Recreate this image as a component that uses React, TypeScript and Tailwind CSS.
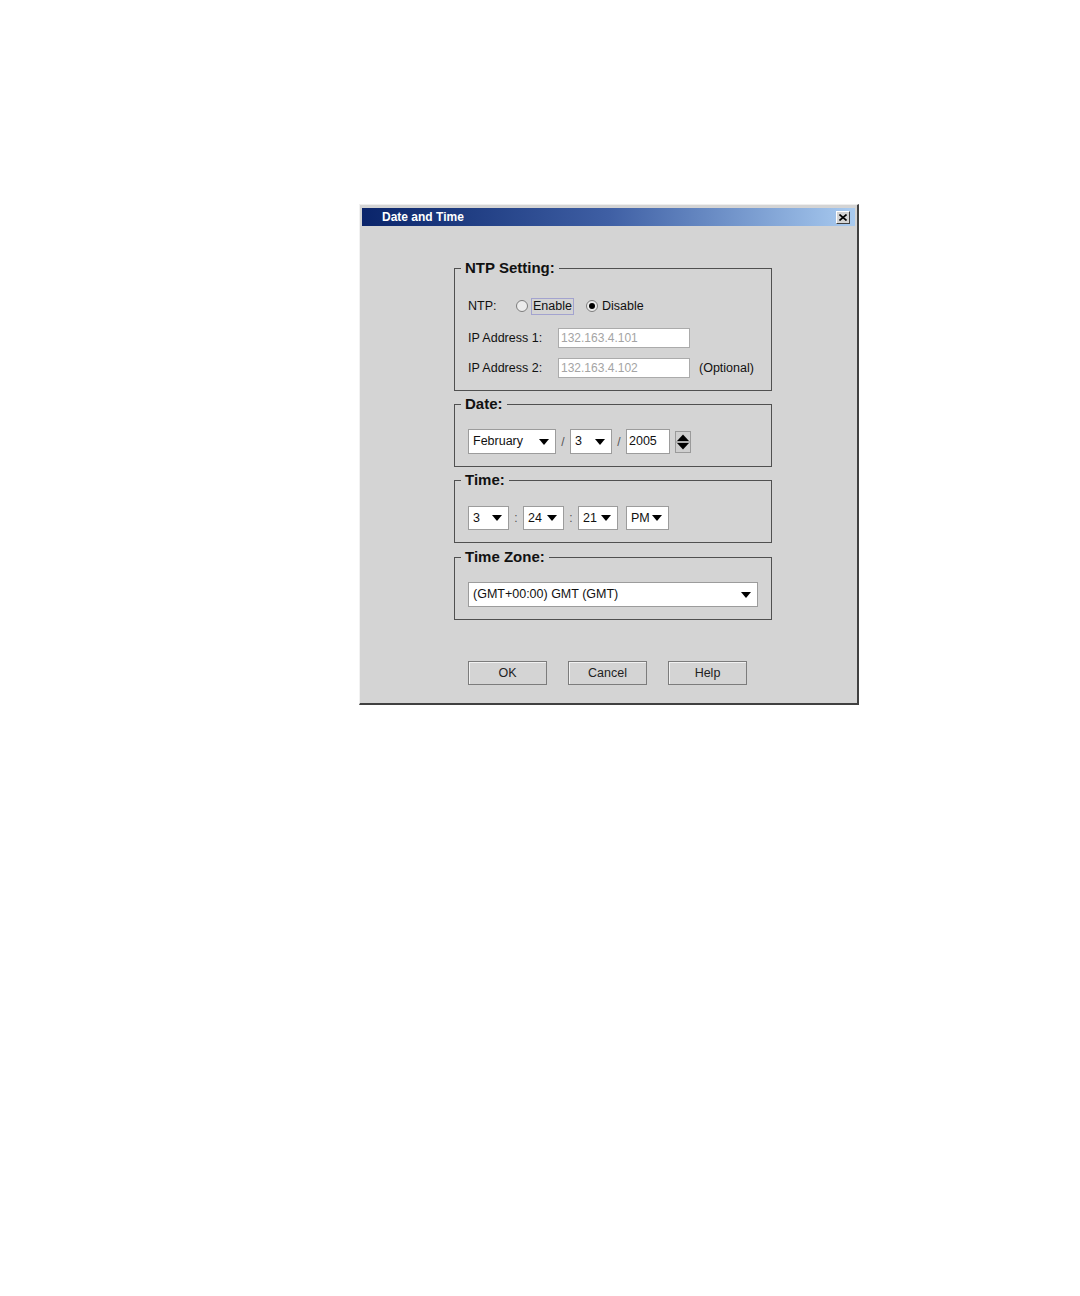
import { FC, ReactNode } from "react";

const Arrow: FC = () => (
  <svg width="10" height="6" viewBox="0 0 10 6" className="shrink-0">
    <path d="M0 0 H10 L5 6 Z" fill="#000" />
  </svg>
);

const Combo: FC<{ value: string; className: string }> = ({ value, className }) => (
  <div
    className={`flex items-center justify-between border border-[#9c9c9c] bg-white pl-[4px] pr-[6px] text-[12.5px] text-[#111] ${className}`}
  >
    <span>{value}</span>
    <Arrow />
  </div>
);

const Sep: FC<{ children: ReactNode }> = ({ children }) => (
  <span className="w-[14px] text-center text-[12px] text-[#555]">{children}</span>
);

const Group: FC<{ title: string; className: string; children: ReactNode }> = ({
  title,
  className,
  children,
}) => (
  <fieldset className={`border border-[#505050] px-[13px] pb-[12px] ${className}`}>
    <legend className="-ml-[7px] px-[4px] text-[15px] font-bold leading-[16px] text-[#111]">
      {title}
    </legend>
    {children}
  </fieldset>
);

const Radio: FC<{ checked?: boolean }> = ({ checked }) => (
  <span className="flex h-[12px] w-[12px] items-center justify-center rounded-full border border-[#7c7c7c] bg-[#ececec]">
    {checked && <span className="h-[6px] w-[6px] rounded-full bg-black" />}
  </span>
);

const IpRow: FC<{ label: string; value: string; note?: string; className: string }> = ({
  label,
  value,
  note,
  className,
}) => (
  <div className={`flex items-center text-[12.5px] text-[#111] ${className}`}>
    <span className="w-[90px]">{label}</span>
    <div className="flex h-[20px] w-[132px] items-center border border-[#ababab] bg-white pl-[2px] text-[12px] text-[#a4a4a4]">
      {value}
    </div>
    {note && <span className="ml-[9px]">{note}</span>}
  </div>
);

const DialogButton: FC<{ label: string }> = ({ label }) => (
  <button className="flex h-[24px] w-[79px] items-center justify-center border border-[#7c7c7c] bg-[#d4d4d4] text-[12.5px] text-[#222] shadow-[inset_1px_1px_0_#f2f2f2]">
    {label}
  </button>
);

const App: FC = () => {
  return (
    <div className="min-h-[1296px] bg-white pl-[359px] pt-[204px] font-['Liberation_Sans',Arial,sans-serif]">
      <div className="flex h-[501px] w-[500px] flex-col border-l border-t border-r-2 border-b-2 border-l-[#f2f2f2] border-t-[#eeeeee] border-r-[#404040] border-b-[#404040] bg-[#d4d4d4] px-[2px] pt-[3px]">
        {/* Title bar */}
        <div className="flex h-[18px] items-center justify-between bg-gradient-to-r from-[#0a246a] via-[#3f5fa4] to-[#a9cbf0] pl-[20px] pr-[5px]">
          <span className="text-[12px] font-bold text-white">Date and Time</span>
          <div className="flex h-[13px] w-[14px] items-center justify-center border-l border-t border-r border-b border-l-white border-t-white border-r-[#404040] border-b-[#404040] bg-[#d4d4d4]">
            <svg width="8" height="7" viewBox="0 0 8 7">
              <path d="M0.5 0.5 L7.5 6.5 M7.5 0.5 L0.5 6.5" stroke="#000" strokeWidth="1.6" />
            </svg>
          </div>
        </div>

        <div className="ml-[92px] flex w-[318px] flex-col">
          {/* NTP */}
          <Group title="NTP Setting:" className="mt-[34px]">
            <div className="mt-[21px] flex h-[18px] items-center text-[12.5px] text-[#111]">
              <span className="w-[48px]">NTP:</span>
              <Radio />
              <span className="ml-[3px] flex h-[17px] w-[43px] items-center border border-[#a3a3cf] pl-[1px]">
                Enable
              </span>
              <span className="ml-[12px]">
                <Radio checked />
              </span>
              <span className="ml-[4px]">Disable</span>
            </div>
            <IpRow label="IP Address 1:" value="132.163.4.101" className="mt-[13px]" />
            <IpRow
              label="IP Address 2:"
              value="132.163.4.102"
              note="(Optional)"
              className="mt-[10px]"
            />
          </Group>

          {/* Date */}
          <Group title="Date:" className="mt-[5px]">
            <div className="mt-[17px] flex h-[25px] items-center">
              <Combo value="February" className="h-[25px] w-[88px]" />
              <Sep>/</Sep>
              <Combo value="3" className="h-[25px] w-[42px]" />
              <Sep>/</Sep>
              <div className="flex h-[25px] w-[44px] items-center border border-[#9c9c9c] bg-white pl-[2px] text-[12.5px] text-[#111]">
                2005
              </div>
              <div className="ml-[5px] flex h-[22px] w-[16px] items-center justify-center border border-[#9a9a9a] bg-[#cfcfcf]">
                <svg width="14" height="18" viewBox="0 0 14 18">
                  <path d="M1 8 H13 L7 1.5 Z" fill="#000" />
                  <path d="M1 10 H13 L7 16.5 Z" fill="#000" />
                  <path d="M0 9 H14" stroke="#8a8a8a" strokeWidth="1" />
                </svg>
              </div>
            </div>
          </Group>

          {/* Time */}
          <Group title="Time:" className="mt-[5px]">
            <div className="mt-[18px] flex h-[24px] items-center">
              <Combo value="3" className="h-[24px] w-[41px]" />
              <Sep>:</Sep>
              <Combo value="24" className="h-[24px] w-[41px]" />
              <Sep>:</Sep>
              <Combo value="21" className="h-[24px] w-[40px]" />
              <Combo value="PM" className="ml-[8px] h-[24px] w-[43px]" />
            </div>
          </Group>

          {/* Time zone */}
          <Group title="Time Zone:" className="mt-[6px]">
            <div className="mt-[17px]">
              <Combo value="(GMT+00:00) GMT (GMT)" className="h-[25px] w-[290px]" />
            </div>
          </Group>

          {/* Buttons */}
          <div className="mt-[41px] flex gap-[21px] pl-[14px]">
            <DialogButton label="OK" />
            <DialogButton label="Cancel" />
            <DialogButton label="Help" />
          </div>
        </div>
      </div>
    </div>
  );
};

export default App;
